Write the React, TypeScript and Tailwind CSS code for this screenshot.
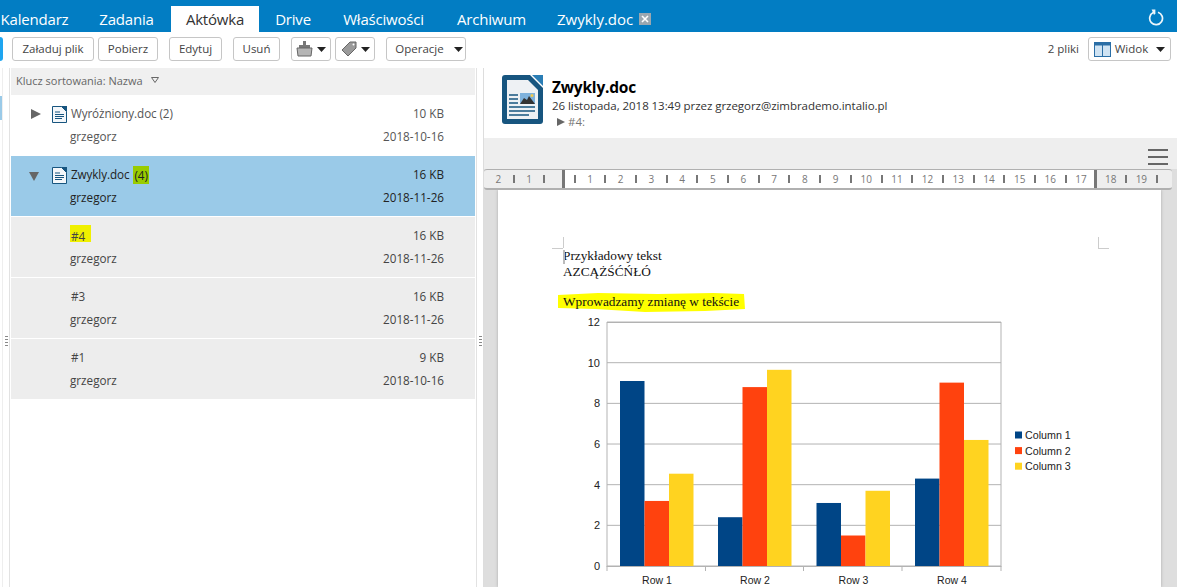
import { ReactNode } from "react";

const tabs = [
  { label: "Kalendarz", w: "w-[84px] pr-[15px]" },
  { label: "Zadania", w: "w-[87px] pr-[2px]" },
  { label: "Aktówka", w: "w-[88px]", active: true },
  { label: "Drive", w: "w-[68px]" },
  { label: "Właściwości", w: "w-[113px]" },
  { label: "Archiwum", w: "w-[103px]" },
];

const rows = [
  { name: "Wyróżniony.doc (2)", size: "10 KB", date: "2018-10-16", arrow: "right", bg: "bg-white", text: "text-[#555]" },
  { name: "Zwykly.doc", mark: "(4)", size: "16 KB", date: "2018-11-26", arrow: "down", bg: "bg-[#9acae8]", text: "text-[#222]" },
  { name: "#4", yellow: true, size: "16 KB", date: "2018-11-26", bg: "bg-[#ededed]", text: "text-[#444]" },
  { name: "#3", size: "16 KB", date: "2018-11-26", bg: "bg-[#ededed]", text: "text-[#444]" },
  { name: "#1", size: "9 KB", date: "2018-10-16", bg: "bg-[#ededed]", text: "text-[#444]" },
];

const bars = [
  [620, 9.1, 3.2, 4.54],
  [718, 2.4, 8.8, 9.65],
  [816.5, 3.1, 1.5, 3.7],
  [915, 4.3, 9.02, 6.2],
];
const colours = ["#004586", "#ff420e", "#ffd320"];

const Caret = () => (
  <svg width="9" height="5" viewBox="0 0 9 5" className="shrink-0">
    <path d="M0 0h9L4.5 5z" fill="#222" />
  </svg>
);

const Btn = ({ w, ml, children }: { w: string; ml: string; children: ReactNode }) => (
  <div className={`${w} ${ml} h-6 shrink-0 flex items-center justify-center gap-1 border border-[#c6c6c6] rounded-[3px] bg-white text-[11.5px] text-[#444]`}>
    {children}
  </div>
);

const DocIcon = () => (
  <svg width="15" height="17" viewBox="0 0 15 17" className="shrink-0">
    <path d="M.5.5h9l5 5v11H.5z" fill="#f4f7fa" stroke="#17557f" />
    <path d="M9 0h6v6z" fill="#17557f" />
    <path d="M3 6h5M3 8.5h9M3 10.5h9M3 12.5h7" stroke="#17557f" />
  </svg>
);

const Ticks = ({ items }: { items: string[] }) => (
  <>
    {items.map((t, i) => (
      <div key={i} className="w-[15.35px] shrink-0 flex items-center justify-center">
        {t === "|" ? <div className="w-0.5 h-2 bg-[#777]" /> : <span>{t}</span>}
      </div>
    ))}
  </>
);

const whiteTicks: string[] = ["|"];
for (let n = 1; n <= 17; n++) whiteTicks.push(String(n), "|");

const Chart = () => (
  <svg width="500" height="272" viewBox="580 315 500 272" className="mt-[5px] ml-[82px] [font-family:'Liberation_Sans',sans-serif]">
    <rect x="607" y="322.5" width="394" height="244" fill="none" stroke="#b3b3b3" />
    {[0, 2, 4, 6, 8, 10, 12].map((v) => {
      const y = 566 - v * 20.33;
      return (
        <g key={v}>
          <line x1="607" x2="1001" y1={y} y2={y} stroke="#b3b3b3" />
          <text x="600" y={y + 4} textAnchor="end" fontSize="11" fill="#222">{v}</text>
        </g>
      );
    })}
    {[607, 705.5, 803.5, 902, 1001].map((x) => (
      <line key={x} x1={x} x2={x} y1="566" y2="571" stroke="#b3b3b3" />
    ))}
    {bars.map(([x, ...vals], i) => (
      <g key={i}>
        {vals.map((v, j) => (
          <rect key={j} x={x + j * 24.5} y={566 - v * 20.33} width="24.5" height={v * 20.33} fill={colours[j]} />
        ))}
        <text x={x + 37} y="584" textAnchor="middle" fontSize="10.5" fill="#222">Row {i + 1}</text>
      </g>
    ))}
    {colours.map((c, i) => (
      <g key={c}>
        <rect x="1015" y={431.5 + i * 15.6} width="7" height="7" fill={c} />
        <text x="1025" y={439 + i * 15.6} fontSize="10.7" fill="#222">Column {i + 1}</text>
      </g>
    ))}
  </svg>
);

export default function App() {
  return (
    <div className="w-[1177px] h-[587px] overflow-hidden flex flex-col bg-white [font-family:'Open_Sans',sans-serif]">
      {/* tabs */}
      <div className="h-8 shrink-0 bg-[#027dc3] flex items-end">
        {tabs.map((t) => (
          <div
            key={t.label}
            className={`${t.w} h-[26px] shrink-0 flex items-center justify-center text-[15px] tracking-[-0.2px] ${t.active ? "bg-white text-[#333]" : "text-white"}`}
          >
            {t.label}
          </div>
        ))}
        <div className="h-[26px] ml-[14px] flex items-center gap-[6px] text-[15px] text-white">
          Zwykly.doc
          <div className="w-3 h-3 bg-[#9aa7b0] flex items-center justify-center">
            <svg width="8" height="8" viewBox="0 0 8 8">
              <path d="M1 1l6 6M7 1L1 7" stroke="#fff" strokeWidth="1.6" />
            </svg>
          </div>
        </div>
        <div className="ml-auto mr-[13px] self-center mt-0.5">
          <svg width="16" height="17" viewBox="0 0 16 17" fill="none">
            <path d="M5.2 3.6A6.4 6.4 0 1 0 10 3.2" stroke="#eef6fb" strokeWidth="1.7" />
            <path d="M3.6 .6l2.4 5.4 1.4-1.4V.6z" fill="#eef6fb" />
          </svg>
        </div>
      </div>

      {/* toolbar */}
      <div className="h-9 shrink-0 flex items-start pt-[5px]">
        <div className="w-[3px] h-6 bg-[#1ea5f0] rounded-r-[3px]" />
        <Btn w="w-[82px]" ml="ml-[9px]">Załaduj plik</Btn>
        <Btn w="w-[60px]" ml="ml-1">Pobierz</Btn>
        <Btn w="w-[53px]" ml="ml-[11px]">Edytuj</Btn>
        <Btn w="w-[47px]" ml="ml-[11px]">Usuń</Btn>
        <Btn w="w-10" ml="ml-[11px]">
          <svg width="17" height="16" viewBox="0 0 17 16">
            <path d="M7 0h3v4h4v3H3V4h4z" fill="#777" />
            <path d="M1 7h15l-1 8H2z" fill="#b5b5b5" stroke="#666" />
          </svg>
          <Caret />
        </Btn>
        <Btn w="w-10" ml="ml-1">
          <svg width="17" height="16" viewBox="0 0 17 16">
            <path d="M10 1h6v6l-8 8-6-6z" fill="#9a9a9a" stroke="#666" />
            <circle cx="13.5" cy="3.5" r="1" fill="#fff" />
          </svg>
          <Caret />
        </Btn>
        <Btn w="w-20" ml="ml-[11px] pl-1.5">
          Operacje
          <span className="ml-1.5"><Caret /></span>
        </Btn>
        <span className="ml-auto text-[11.5px] text-[#444] leading-6">2 pliki</span>
        <Btn w="w-[83px]" ml="ml-[9px] mr-1.5">
          <svg width="17" height="15" viewBox="0 0 17 15">
            <rect x=".5" y=".5" width="16" height="14" fill="#cfe3f3" stroke="#2a6ea6" />
            <path d="M.5 .5h16v3H.5z" fill="#2a6ea6" />
            <path d="M8.500 0v15" stroke="#2a6ea6" />
          </svg>
          Widok
          <span className="ml-1"><Caret /></span>
        </Btn>
      </div>

      {/* body */}
      <div className="flex-1 min-h-0 flex">
        <div className="w-[10px] shrink-0 flex border-r border-[#e2e2e2]">
          <div className="w-[3px] border-r border-[#eee] pt-[28px]">
            <div className="h-6 bg-[#9acae8]" />
          </div>
          <div className="pt-[268px] pl-0.5 flex flex-col gap-0.5">
            {[0, 1, 2, 3].map((i) => (
              <div key={i} className="w-[3px] h-px bg-[#888]" />
            ))}
          </div>
        </div>

        {/* list */}
        <div className="w-[466px] shrink-0 px-px flex flex-col">
          <div className="h-[27px] shrink-0 bg-[#f0f0f0] flex items-center gap-2 pl-[5px] text-[11px] text-[#666]">
            Klucz sortowania: Nazwa
            <svg width="8" height="6" viewBox="0 0 8 6" className="mb-1">
              <path d="M.5.5h7L4 5.5z" fill="none" stroke="#666" />
            </svg>
          </div>
          {rows.map((r) => (
            <div key={r.name} className={`h-[60px] shrink-0 mb-px pt-2.5 pl-[19px] pr-[31px] ${r.bg} ${r.text} text-[11.7px]`}>
              <div className="h-[18px] flex items-center">
                <div className="w-[22px] shrink-0">
                  {r.arrow === "right" && (
                    <svg width="10" height="10" viewBox="0 0 10 10" className="ml-px"><path d="M0 0l10 5-10 5z" fill="#666" /></svg>
                  )}
                  {r.arrow === "down" && (
                    <svg width="10" height="9" viewBox="0 0 10 9" className="-ml-px mt-0.5"><path d="M0 0h10L5 9z" fill="#666" /></svg>
                  )}
                </div>
                <div className="w-[19px] shrink-0">{r.arrow && <DocIcon />}</div>
                {r.yellow ? (
                  <span className="bg-[#f0f000] leading-3 pt-[5px] mb-[5px] -ml-px px-px pr-1.5">{r.name}</span>
                ) : (
                  <span className="tracking-[-0.1px]">{r.name}</span>
                )}
                {r.mark && <span className="ml-1 bg-[#99cc00] leading-[18px] px-px">{r.mark}</span>}
                <span className="ml-auto">{r.size}</span>
              </div>
              <div className="mt-[5px] h-[18px] flex items-center justify-between pl-10">
                <span>grzegorz</span>
                <span>{r.date}</span>
              </div>
            </div>
          ))}
        </div>

        {/* sash */}
        <div className="w-[7px] shrink-0 border-l border-[#e2e2e2] pt-[268px] pl-[2px] flex flex-col gap-0.5">
          {[0, 1, 2, 3].map((i) => (
            <div key={i} className="w-[3px] h-px bg-[#888]" />
          ))}
        </div>

        {/* preview */}
        <div className="flex-1 min-w-0 flex flex-col border-l border-[#ddd]">
          <div className="h-[70px] shrink-0 flex pl-[18px] pt-[7px] gap-[9px]">
            <svg width="41" height="49" viewBox="0 0 41 49" className="shrink-0">
              <path d="M3 0h25l13 13v33a3 3 0 0 1-3 3H3a3 3 0 0 1-3-3V3a3 3 0 0 1 3-3z" fill="#17557f" />
              <path d="M5 5h21l10 10v29H5z" fill="#eef1f4" />
              <path d="M30 0h11v11z" fill="#2a7db5" />
              <path d="M7 20h9M7 24h9M7 28h9M7 32h26M7 36h26M7 40h20" stroke="#17557f" strokeWidth="1.6" />
              <rect x="18" y="18" width="15" height="11" fill="#7fb2dc" />
              <path d="M18 29l4-6 3 2 2-4 6 8z" fill="#333" />
              <circle cx="30" cy="20.500" r="1.500" fill="#f2c94c" />
            </svg>
            <div className="text-[#333]">
              <div className="text-[15.5px] leading-5 font-bold text-black mt-0.5 tracking-[-0.2px]">Zwykly.doc</div>
              <div className="text-[11.5px] leading-4 mt-px tracking-[-0.05px]">26 listopada, 2018 13:49 przez grzegorz@zimbrademo.intalio.pl</div>
              <div className="text-[11.5px] leading-4 ml-[5px] text-[#777] flex items-center gap-[3px]">
                <svg width="8" height="8" viewBox="0 0 8 8"><path d="M0 0l8 4-8 4z" fill="#666" /></svg>
                #4:
              </div>
            </div>
          </div>

          <div className="flex-1 min-h-0 bg-[#dedede] flex flex-col">
            <div className="h-[31px] shrink-0 bg-[#eee] flex flex-col items-end gap-[5px] pt-[11px] pr-[9px]">
              <div className="w-5 h-0.5 bg-[#666]" />
              <div className="w-5 h-0.5 bg-[#666]" />
              <div className="w-5 h-0.5 bg-[#666]" />
            </div>
            <div className="h-[21px] shrink-0 w-[688px] flex rounded-[3px] border-b-2 border-t border-[#b0b0b0] bg-[#eee] text-[10px] text-[#777] overflow-hidden z-10">
              <div className="w-[78px] shrink-0 flex justify-end pr-[10px]">
                <Ticks items={["2", "|", "1", "|"]} />
              </div>
              <div className="w-[535px] shrink-0 flex bg-white border-x-[3px] border-[#777] pl-0.5">
                <Ticks items={whiteTicks} />
              </div>
              <div className="flex pl-1.5">
                <Ticks items={["18", "|", "19", "|"]} />
              </div>
            </div>

            <div className="relative ml-[14px] w-[663px] flex-1 min-h-0 bg-white overflow-hidden shadow-[0_0_3px_#aaa]">
              <div className="absolute left-[54px] top-[58px] w-[11px] h-px bg-[#ccc]" />
              <div className="absolute left-[65px] top-[47px] w-px h-[11px] bg-[#ccc]" />
              <div className="absolute left-[600px] top-[58px] w-[11px] h-px bg-[#ccc]" />
              <div className="absolute left-[600px] top-[47px] w-px h-[11px] bg-[#ccc]" />
              <div className="absolute left-[65px] top-[60px] w-0.5 h-[14px] bg-[#bbb]" />
              <div className="pt-[58px] text-[13.3px] leading-4 text-[#111] [font-family:'Liberation_Serif',serif]">
                <div className="pl-[65px]">Przykładowy tekst</div>
                <div className="pl-[65px]">AZCĄŻŚĆŃŁÓ</div>
                <div className="relative mt-3.5 pl-[65px]">
                  <svg width="188" height="21" viewBox="0 0 188 21" className="absolute left-[59px] -top-[2px]">
                    <path d="M1 3l40-2 60 1 55-1 31 1 1 15-40 2-60 1-50-3-37-1z" fill="#ffff00" />
                  </svg>
                  <span className="relative">Wprowadzamy zmianę w tekście</span>
                </div>
                <Chart />
              </div>
            </div>
          </div>
        </div>
      </div>
    </div>
  );
}
